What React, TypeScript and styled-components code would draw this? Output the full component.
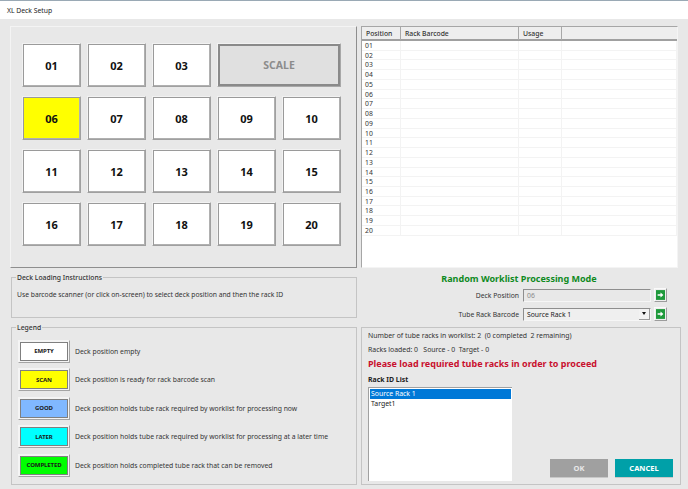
import React from "react";
import styled, { createGlobalStyle } from "styled-components";

const GlobalStyle = createGlobalStyle`
  html, body {
    margin: 0;
    padding: 0;
    background: #e8e8e8;
  }
  body {
    font-family: "Noto Sans", "Open Sans", sans-serif;
    font-size: 6.8px;
    color: #2a2a2a;
  }
`;

const Window = styled.div`
  width: 688px;
  height: 489px;
  overflow: hidden;
  display: flex;
  flex-direction: column;
  background: #e8e8e8;
`;

const TitleBar = styled.div`
  height: 18px;
  border-top: 1px solid #9aa9b5;
  background: #fff;
  padding-left: 7px;
  display: flex;
  align-items: center;
  font-size: 6.8px;
  color: #222;
`;

const Columns = styled.div`
  display: flex;
  gap: 4px;
  padding: 7px 8px 0 10px;
`;

const LeftColumn = styled.div`
  width: 347px;
  display: flex;
  flex-direction: column;
`;

const RightColumn = styled.div`
  width: 319px;
  display: flex;
  flex-direction: column;
`;

const DeckPanel = styled.div`
  box-sizing: border-box;
  height: 242px;
  border: 1px solid;
  border-color: #f4f4f4 #8e8e8e #8e8e8e #f4f4f4;
  padding: 16px 0 0 11px;
`;

const DeckGrid = styled.div`
  display: grid;
  grid-template-columns: repeat(5, 59px);
  grid-auto-rows: 44px;
  column-gap: 6px;
  row-gap: 9px;
`;

const DeckButton = styled.button<{ $selected?: boolean }>`
  box-sizing: border-box;
  margin: 0;
  padding: 0;
  border: 1px solid;
  border-color: #f2f2f2 #a0a0a0 #a0a0a0 #f2f2f2;
  box-shadow: inset 1px 1px 0 #9a9a9a, inset -1px -1px 0 #b0b0b0;
  background: ${({ $selected }) => ($selected ? "#ffff00" : "#fff")};
  font-family: inherit;
  font-size: 11px;
  font-weight: 700;
  color: #111;
`;

const ScaleButton = styled.button`
  box-sizing: border-box;
  grid-column: span 2;
  margin: 0;
  padding: 0;
  border: 1px solid;
  border-color: #f2f2f2 #a8a8a8 #a8a8a8 #f2f2f2;
  box-shadow: inset 0 0 0 2px #8a8a8a;
  background: #e0e0e0;
  font-family: inherit;
  font-size: 10.5px;
  font-weight: 700;
  color: #8c8c8c;
`;

const GroupBox = styled.fieldset<{ $height: number; $top: number }>`
  box-sizing: border-box;
  height: ${({ $height }) => $height}px;
  margin: ${({ $top }) => $top}px 0 0 1px;
  padding: 0 5px;
  border: 1px solid #c4c4c4;
  min-width: 0;
`;

const GroupTitle = styled.legend`
  padding: 0 1px;
  margin-left: -1px;
  font-size: 6.8px;
  line-height: 11px;
  font-weight: 500;
  color: #333;
`;

const Instructions = styled.p`
  margin: 6px 0 0;
  font-size: 6.75px;
  line-height: 11px;
  color: #333;
`;

const LegendList = styled.div`
  display: flex;
  flex-direction: column;
  gap: 5.5px;
  padding: 6.5px 0 0 1px;
`;

const LegendRow = styled.div`
  display: flex;
  align-items: center;
  gap: 5px;
  font-size: 6.8px;
  white-space: nowrap;
  color: #333;
`;

const LegendSwatch = styled.div<{ $color: string }>`
  box-sizing: border-box;
  width: 52px;
  height: 23px;
  flex-shrink: 0;
  display: flex;
  align-items: center;
  justify-content: center;
  border: 1px solid;
  border-color: #f4f4f4 #a4a4a4 #a4a4a4 #f4f4f4;
  box-shadow: inset 0 0 0 1px #f4f4f4, inset 0 0 0 2px #7f7f7f;
  background: ${({ $color }) => $color};
  font-size: 6px;
  font-weight: 700;
  color: #1a1a1a;
  letter-spacing: -0.1px;
`;

const TableFrame = styled.div`
  box-sizing: border-box;
  width: 317px;
  height: 242px;
  background: #fff;
  border-top: 1px solid #a6a6a6;
  border-left: 1px solid #a6a6a6;
  border-right: 1px solid #f4f4f4;
  border-bottom: 1px solid #f4f4f4;
`;

const HeaderRow = styled.div`
  display: grid;
  grid-template-columns: 39px 118px 43px 1fr;
  height: 14px;
  box-sizing: border-box;
  background: #eeeeee;
  border-bottom: 2px solid #a0a0a0;
`;

const HeaderCell = styled.div`
  padding-left: 4px;
  border-right: 1px solid #a8a8a8;
  font-size: 6.8px;
  font-weight: 500;
  line-height: 13px;
  color: #333;
  &:last-child {
    border-right: none;
  }
`;

const BodyRow = styled.div`
  display: grid;
  grid-template-columns: 39px 118px 43px 1fr;
  height: 9.74px;
  box-sizing: border-box;
  border-bottom: 1px solid #f3f3f3;
`;

const BodyCell = styled.div`
  padding-left: 3px;
  border-right: 1px solid #f3f3f3;
  font-size: 6.8px;
  line-height: 9px;
  color: #333;
`;

const ModeArea = styled.div`
  height: 60px;
  box-sizing: border-box;
  padding-top: 4px;
  display: flex;
  flex-direction: column;
`;

const ModeTitle = styled.div`
  padding-right: 3px;
  text-align: center;
  font-size: 9px;
  line-height: 14px;
  font-weight: 700;
  color: #0e8a1e;
`;

const FormRow = styled.div`
  height: 14px;
  margin-top: 2px;
  display: flex;
  align-items: center;
  &:last-child {
    margin-top: 5px;
  }
`;

const FormLabel = styled.label`
  width: 158px;
  text-align: right;
  font-size: 6.8px;
  color: #333;
`;

const FieldBox = styled.div<{ $readOnly?: boolean }>`
  box-sizing: border-box;
  width: 128px;
  height: 13px;
  margin-left: 4px;
  padding-left: 3px;
  display: flex;
  align-items: center;
  justify-content: space-between;
  border-top: 1px solid #8e8e8e;
  border-left: 1px solid #8e8e8e;
  border-right: 1px solid #f6f6f6;
  border-bottom: 1px solid #f6f6f6;
  background: ${({ $readOnly }) => ($readOnly ? "#e8e8e8" : "#efefef")};
  font-size: 6.8px;
  color: ${({ $readOnly }) => ($readOnly ? "#8a8a8a" : "#222")};
`;

const ComboArrow = styled.span`
  box-sizing: border-box;
  width: 11px;
  height: 11px;
  display: flex;
  align-items: center;
  justify-content: center;
  background: #f2f2f2;
  border-right: 1px solid #9a9a9a;
  border-bottom: 1px solid #9a9a9a;
  &::after {
    content: "";
    border-left: 2.5px solid transparent;
    border-right: 2.5px solid transparent;
    border-top: 3px solid #111;
  }
`;

const GoButton = styled.button`
  box-sizing: border-box;
  width: 13px;
  height: 14px;
  margin: 0 0 0 3px;
  padding: 1px;
  display: flex;
  align-items: center;
  justify-content: center;
  background: #eeeeee;
  border: 1px solid;
  border-color: #fafafa #9c9c9c #9c9c9c #fafafa;
`;

const StatusPanel = styled.div`
  box-sizing: border-box;
  height: 158px;
  width: 320px;
  margin-top: -1px;
  border: 1px solid #c4c4c4;
  padding: 2px 6px 0;
`;

const StatusLine = styled.div`
  font-size: 6.9px;
  line-height: 11px;
  margin-bottom: 3px;
  color: #333;
  white-space: pre;
`;

const AlertLine = styled.div`
  font-size: 9px;
  line-height: 14px;
  font-weight: 700;
  color: #c8102e;
  margin-top: -1px;
`;

const ListLabel = styled.div`
  margin-top: 3px;
  font-size: 6.9px;
  line-height: 11px;
  font-weight: 700;
  color: #222;
`;

const BottomRow = styled.div`
  display: flex;
  justify-content: space-between;
  align-items: flex-end;
`;

const RackList = styled.div`
  box-sizing: border-box;
  width: 144px;
  height: 94px;
  margin-top: 2px;
  padding: 1px 1px 0;
  background: #fff;
  border-top: 1px solid #a0a0a0;
  border-left: 1px solid #a0a0a0;
`;

const RackItem = styled.div<{ $selected?: boolean }>`
  height: 10px;
  line-height: 10px;
  padding-left: 1px;
  font-size: 6.9px;
  background: ${({ $selected }) => ($selected ? "#0078d7" : "transparent")};
  color: ${({ $selected }) => ($selected ? "#fff" : "#222")};
`;

const DialogButtons = styled.div`
  display: flex;
  gap: 7px;
  margin: 0 1px 4px 0;
`;

const DialogButton = styled.button<{ $primary?: boolean }>`
  box-sizing: border-box;
  width: 58px;
  height: 18px;
  margin: 0;
  padding: 0;
  border: none;
  box-shadow: 0 1px 0 #c8c8c8;
  background: ${({ $primary }) => ($primary ? "#00a0a8" : "#a0a0a0")};
  color: ${({ $primary }) => ($primary ? "#fff" : "#e8e8e8")};
  font-family: inherit;
  font-size: 7.5px;
  font-weight: 700;
`;

const deckRows = ["06", "07", "08", "09", "10", "11", "12", "13", "14", "15", "16", "17", "18", "19", "20"];
const positions = Array.from({ length: 20 }, (_, i) => String(i + 1).padStart(2, "0"));

const legendItems = [
  { label: "EMPTY", color: "#ffffff", text: "Deck position empty" },
  { label: "SCAN", color: "#ffff00", text: "Deck position is ready for rack barcode scan" },
  { label: "GOOD", color: "#80b8ff", text: "Deck position holds tube rack required by worklist for processing now" },
  { label: "LATER", color: "#00ffff", text: "Deck position holds tube rack required by worklist for processing at a later time" },
  { label: "COMPLETED", color: "#00ff00", text: "Deck position holds completed tube rack that can be removed" },
];

const GoIcon = () => (
  <svg width="11" height="12" viewBox="0 0 11 12">
    <rect width="11" height="12" fill="#1f9a3c" />
    <path d="M2 5h3.5V3L9 6 5.5 9V7H2z" fill="#fff" />
  </svg>
);

const App = () => (
  <Window>
    <GlobalStyle />
    <TitleBar>XL Deck Setup</TitleBar>
    <Columns>
      <LeftColumn>
        <DeckPanel>
          <DeckGrid>
            {["01", "02", "03"].map((n) => (
              <DeckButton key={n}>{n}</DeckButton>
            ))}
            <ScaleButton>SCALE</ScaleButton>
            {deckRows.map((n) => (
              <DeckButton key={n} $selected={n === "06"}>
                {n}
              </DeckButton>
            ))}
          </DeckGrid>
        </DeckPanel>
        <GroupBox $height={46} $top={4}>
          <GroupTitle>Deck Loading Instructions</GroupTitle>
          <Instructions>Use barcode scanner (or click on-screen) to select deck position and then the rack ID</Instructions>
        </GroupBox>
        <GroupBox $height={163} $top={4}>
          <GroupTitle>Legend</GroupTitle>
          <LegendList>
            {legendItems.map((item) => (
              <LegendRow key={item.label}>
                <LegendSwatch $color={item.color}>{item.label}</LegendSwatch>
                {item.text}
              </LegendRow>
            ))}
          </LegendList>
        </GroupBox>
      </LeftColumn>
      <RightColumn>
        <TableFrame>
          <HeaderRow>
            <HeaderCell>Position</HeaderCell>
            <HeaderCell>Rack Barcode</HeaderCell>
            <HeaderCell>Usage</HeaderCell>
            <HeaderCell />
          </HeaderRow>
          {positions.map((p) => (
            <BodyRow key={p}>
              <BodyCell>{p}</BodyCell>
              <BodyCell />
              <BodyCell />
              <BodyCell />
            </BodyRow>
          ))}
        </TableFrame>
        <ModeArea>
          <ModeTitle>Random Worklist Processing Mode</ModeTitle>
          <FormRow>
            <FormLabel>Deck Position</FormLabel>
            <FieldBox $readOnly>06</FieldBox>
            <GoButton>
              <GoIcon />
            </GoButton>
          </FormRow>
          <FormRow>
            <FormLabel>Tube Rack Barcode</FormLabel>
            <FieldBox>
              Source Rack 1
              <ComboArrow />
            </FieldBox>
            <GoButton>
              <GoIcon />
            </GoButton>
          </FormRow>
        </ModeArea>
        <StatusPanel>
          <StatusLine>Number of tube racks in worklist: 2  (0 completed  2 remaining)</StatusLine>
          <StatusLine>Racks loaded: 0   Source - 0  Target - 0</StatusLine>
          <AlertLine>Please load required tube racks in order to proceed</AlertLine>
          <ListLabel>Rack ID List</ListLabel>
          <BottomRow>
            <RackList>
              <RackItem $selected>Source Rack 1</RackItem>
              <RackItem>Target1</RackItem>
            </RackList>
            <DialogButtons>
              <DialogButton>OK</DialogButton>
              <DialogButton $primary>CANCEL</DialogButton>
            </DialogButtons>
          </BottomRow>
        </StatusPanel>
      </RightColumn>
    </Columns>
  </Window>
);

export default App;
